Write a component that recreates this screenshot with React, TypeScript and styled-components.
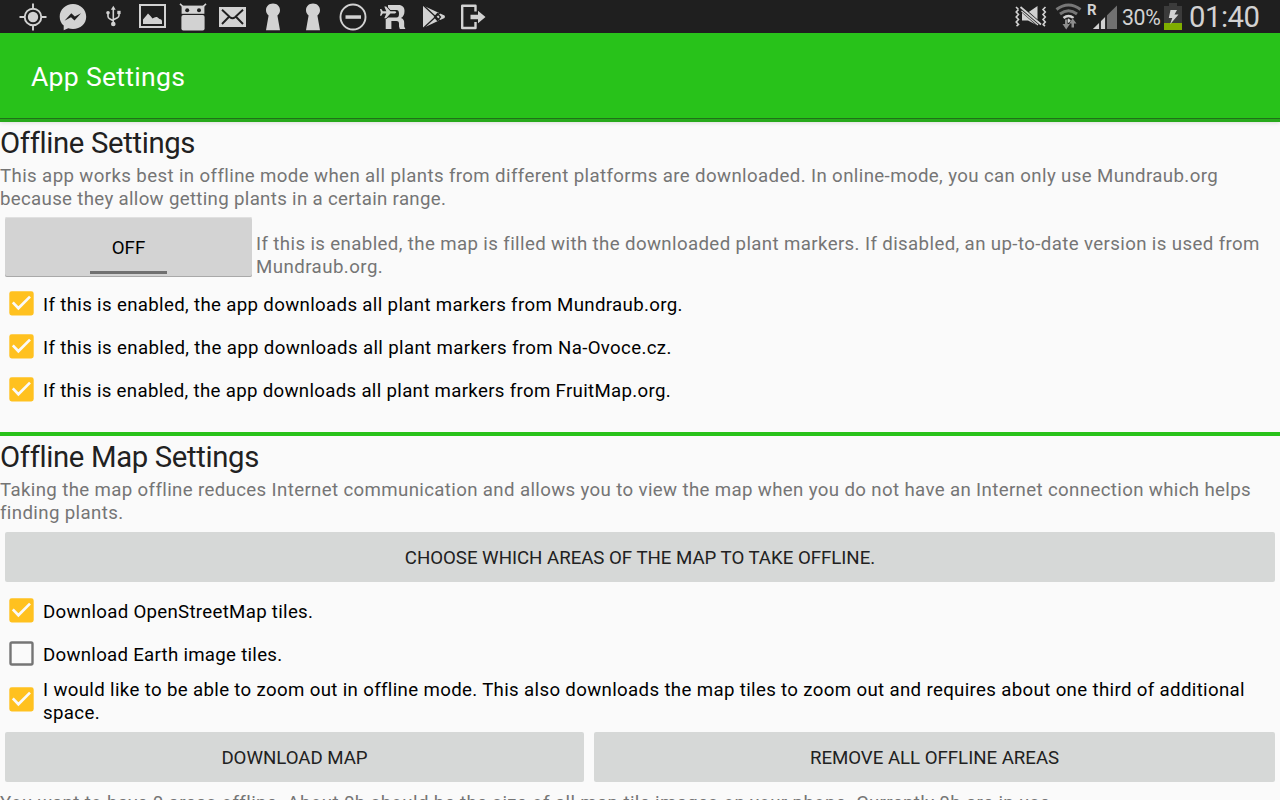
import React from "react";
import styled, { createGlobalStyle } from "styled-components";

const Global = createGlobalStyle`
  * { box-sizing: border-box; }
  html, body { margin: 0; padding: 0; overflow: hidden; background: #fafafa; }
  body { font-family: Roboto, "Liberation Sans", sans-serif; }
`;

const Screen = styled.div`
  width: 1280px;
  height: 800px;
  overflow: hidden;
  background: #fafafa;
`;

const StatusBar = styled.header`
  display: flex;
  justify-content: space-between;
  height: 33px;
  padding-left: 13px;
  background: #1f1f1f;
  color: #d2d2d2;
`;

const IconStrip = styled.div`
  display: flex;
  svg { display: block; }
`;

const Battery = styled.span`
  width: 40px;
  margin-left: 4px;
  font-size: 21.3px;
  line-height: 36px;
  letter-spacing: -0.35px;
`;

const Clock = styled.span`
  width: 96px;
  padding-left: 5px;
  font-size: 29.3px;
  line-height: 34px;
  letter-spacing: -0.5px;
`;

const ActionBar = styled.div`
  display: flex;
  align-items: center;
  height: 89px;
  padding: 0 31px 2px;
  background: linear-gradient(#28c21a 0 85px, #20711a 85px 86px, #27a91b 86px 89px);
  box-shadow: 0 1px 4px rgba(0, 0, 0, 0.12);
  color: #fff;
`;

const Title = styled.h1`
  margin: 0;
  font-size: 26.6px;
  font-weight: 400;
  letter-spacing: 0.27px;
`;

const Heading = styled.h2`
  height: 34px;
  margin: 0;
  font-size: 29.3px;
  line-height: 34px;
  font-weight: 400;
  color: #212121;
  white-space: nowrap;
  letter-spacing: -0.35px;
`;

const Section = styled.section<{ $height?: number }>`
  padding-top: 4px;
  ${(p) => (p.$height ? `height: ${p.$height}px;` : "")}
`;

const Description = styled.div<{ $top?: number }>`
  padding-top: ${(p) => p.$top ?? 0}px;
  color: #757575;
`;

const Line = styled.span<{ $spacing?: number }>`
  display: block;
  width: max-content;
  height: 23px;
  font-size: 18.66px;
  line-height: 23px;
  white-space: nowrap;
  letter-spacing: ${(p) => p.$spacing ?? 0.37}px;
`;

const ToggleRow = styled.div`
  display: flex;
  margin-top: 6px;
  padding-left: 5px;
  height: 65px;
`;

const Toggle = styled.button`
  display: flex;
  flex-direction: column;
  align-items: center;
  justify-content: flex-end;
  width: 247px;
  height: 60px;
  margin-right: 4px;
  padding: 0 0 3px;
  border: 0;
  border-radius: 2px;
  background: #d3d3d3;
  box-shadow: inset 0 1px 0 #e0e0e0, inset 0 -1px 0 #a9a9a9;
  color: #000;
  font: 18.66px Roboto, sans-serif;
`;

const ToggleLabel = styled.span`
  line-height: 22px;
  margin-bottom: 12px;
`;

const Indicator = styled.span`
  width: 77px;
  height: 3px;
  background: #707070;
`;

const CheckRow = styled.label<{ $height?: number }>`
  display: flex;
  align-items: center;
  height: ${(p) => p.$height ?? 43}px;
  padding-left: 9px;
  color: #000;
  svg { flex: none; margin-right: 9px; }
`;

const CheckLabel = styled.span<{ $top: number }>`
  padding-top: ${(p) => p.$top}px;
`;

const CheckGroup = styled.div`
  margin-top: 7px;
`;

const Divider = styled.hr`
  height: 4px;
  margin: 0;
  border: 0;
  background: #28c21a;
`;

const ButtonRow = styled.div<{ $top: number }>`
  display: flex;
  gap: 10px;
  padding: ${(p) => p.$top}px 5px 0;
`;

const Button = styled.button<{ $width?: number }>`
  ${(p) => (p.$width ? `width: ${p.$width}px;` : "flex: 1;")}
  height: 50px;
  padding: 2px 0 0;
  border: 0;
  border-radius: 2px;
  background: #d6d8d7;
  color: #212121;
  font: 18.66px Roboto, sans-serif;
  letter-spacing: -0.02px;
`;

function CheckBox({ checked }: { checked: boolean }) {
  return (
    <svg width="25" height="25" viewBox="0 0 25 25">
      {checked ? (
        <>
          <rect x="0.3" y="0.3" width="24.4" height="24.2" rx="2.4" fill="#ffc11f" />
          <path d="M3.8 11.4L9.4 17.2L21 5.6" fill="none" stroke="#fafafa" strokeWidth="2.7" />
        </>
      ) : (
        <rect x="1.5" y="1.5" width="22" height="22" rx="1.4" fill="none" stroke="#757575" strokeWidth="2.4" />
      )}
    </svg>
  );
}

function Check({ checked = true, spacing = 0.34, lines, height }: {
  checked?: boolean; spacing?: number; lines: string[]; height?: number;
}) {
  return (
    <CheckRow $height={height}>
      <CheckBox checked={checked} />
      <CheckLabel $top={lines.length > 1 ? 5 : 3}>
        {lines.map((l) => <Line key={l} $spacing={spacing}>{l}</Line>)}
      </CheckLabel>
    </CheckRow>
  );
}

const INK = "#d2d2d2";
const BAR = "#1f1f1f";

const keyhole = (
  <path d="M20 3.6C15.8 3.6 13 6.5 13 10.2C13 12.6 14.2 14.2 15.6 15.4L13 30.3H27L24.4 15.4C25.8 14.2 27 12.6 27 10.2C27 6.5 24.2 3.6 20 3.6Z" fill={INK} />
);

const notificationIcons: React.ReactNode[] = [
  <g fill="none" stroke={INK}>
    <circle cx="20" cy="17" r="8.3" strokeWidth="1.9" />
    <circle cx="20" cy="17" r="5.2" fill={INK} stroke="none" />
    <path d="M20 3.5V9M20 25V30.5M6.5 17H12M28 17H33.5" strokeWidth="1.9" />
  </g>,
  <g>
    <path d="M20 4C12.6 4 6.7 9.6 6.7 16.7C6.7 20.4 8.3 23.5 10.7 25.6V30.3L15.2 28.3C16.7 28.8 18.3 29 20 29C27.4 29 33.2 23.7 33.2 16.7S27.4 4 20 4Z" fill={INK} />
    <path d="M11.5 20.8L18.3 13.2L21.8 16.4L28 13.2L21.5 20.5L18 17.2Z" fill={BAR} />
  </g>,
  <g stroke={INK} fill="none" strokeWidth="1.6">
    <path d="M20.3 8V24M15 13V16.5Q15 18 17 19L20.3 20.8M26 12.5V15.5Q26 17 24 18L20.3 19.8" />
    <path d="M20.3 5.8L22.7 9.8H17.9Z" fill={INK} stroke="none" />
    <circle cx="15" cy="12.8" r="1.8" fill={INK} stroke="none" />
    <rect x="24.3" y="10.8" width="3.3" height="3.3" fill={INK} stroke="none" />
    <circle cx="20.3" cy="24" r="2.3" fill={INK} stroke="none" />
  </g>,
  <g>
    <rect x="7" y="5" width="25" height="22" fill="none" stroke={INK} strokeWidth="2" />
    <path d="M10 24V19.5Q11.5 17.5 13 16L15 13.5L17.5 16L19.5 18.5Q22 16.5 24 17L26.5 19Q29 19 29 21.5V24Z" fill={INK} />
  </g>,
  <g>
    <path d="M7 3.8L9.8 6.5M33 3.8L30.2 6.5" stroke={INK} strokeWidth="1.6" />
    <path d="M8.6 5.6H31.4V13.8H8.6Z" fill={INK} />
    <circle cx="14.2" cy="10.2" r="2" fill={BAR} /><circle cx="26" cy="10.2" r="2" fill={BAR} />
    <rect x="8.4" y="15" width="23.2" height="15.4" rx="2" fill={INK} />
  </g>,
  <g>
    <rect x="6" y="7" width="27" height="20" fill={INK} />
    <path d="M9 9.8L17 17.2Q19.5 19.4 22 17.2L30 9.8M9 24L15.8 17M30 24L23.2 17" fill="none" stroke={BAR} strokeWidth="1.9" />
  </g>,
  keyhole,
  keyhole,
  <g>
    <circle cx="20" cy="17" r="12.5" fill="none" stroke={INK} strokeWidth="1.9" />
    <rect x="12.5" y="15.3" width="15.5" height="3.5" fill={INK} />
  </g>,
  <g fill={INK}>
    <path d="M15 5H25.500C29.500 5 31.500 7.500 31.500 11C31.500 14.500 30.300 16.800 28 18C30.600 19 31.200 20.500 31.200 23V26.500L32.400 29H26.800L26 26.500V23.500C26 21.800 25 21 23.500 21H18.400V29H12.700V18.500Q12.700 17.500 13.700 17.500H23.500C25.500 17.500 26 16 26 13.500S25 10 23.500 10H15Z" />
    <path d="M7 9H8.300L9.800 11.300H13.300L11.300 6.500H13.200L17.400 11.300H22Q24.600 12.300 22 13.500H17.400L13.200 18.300H11.300L13.300 13.500H9.800L8.300 15.800H7L7.800 12.400Z" stroke={BAR} strokeWidth="1.600" paintOrder="stroke" />
  </g>,
  <g>
    <path d="M10 5.6L31.5 15.5Q32.5 16.8 31.5 18L10 28Z" fill={INK} />
    <path d="M10 5L27.5 21.3M10 28.5L27.5 12.3M21.5 17L24.5 13.5L27.5 17L24.5 20.5Z" stroke={BAR} strokeWidth="1.3" fill="none" />
  </g>,
  <g>
    <path d="M22.5 11.5V5.8H9.2V28H22.5V22" fill="none" stroke={INK} strokeWidth="2.4" strokeLinejoin="round" />
    <path d="M17.5 14.8H25V10.8L32.5 17L25 23.2V19.2H17.5Z" fill={INK} />
  </g>,
];

function SystemIcons() {
  return (
    <svg width="118" height="33" viewBox="1000 0 118 33">
      <g fill="none" stroke={INK} strokeWidth="1.6">
        <path d="M1016 7L1018.500 9.500L1016.200 12L1018.500 14.500L1016.200 17L1018.500 19.500L1016.200 22L1018.500 24.500L1016.500 26" />
        <path d="M1045.500 7L1043 9.500L1045.300 12L1043 14.500L1045.300 17L1043 19.500L1045.300 22L1043 24.500L1045 26" />
      </g>
      <path d="M1022 12.500H1028L1037.500 6V25.500L1028 20.500H1022Z" fill={INK} />
      <path d="M1020 7.500L1041 26" stroke={BAR} strokeWidth="5" />
      <path d="M1020.500 7L1041 24.500" stroke={INK} strokeWidth="1.8" />
      <path d="M1021.500 11L1038 25" stroke={INK} strokeWidth="1.2" />
      <g fill="none" strokeWidth="3">
        <path d="M1056.500 9.500Q1068.500 .5 1080.500 9.500" stroke="#777" />
        <path d="M1060 14Q1068.500 7.500 1077 14" stroke="#777" />
        <path d="M1063.500 18Q1068.500 14 1073.500 18" stroke={INK} strokeWidth="2.5" />
        <path d="M1066 20.500L1068.500 23L1071 20.500L1068.500 18.500Z" fill={INK} stroke="none" />
      </g>
      <path d="M1062.500 24H1065V19.500H1067.500V24H1070L1066.200 29.500ZM1069 23.500L1072.700 18.500L1076.500 23.500H1074V27.500H1071.500V23.500Z" fill="#8d8d8d" stroke={BAR} strokeWidth=".8" paintOrder="stroke" />
      <path d="M1093 29L1117 5.500V29Z" fill="#707070" />
      <path d="M1093 29L1106 16.200V29Z" fill={INK} />
      <path d="M1100 20V29M1106 15V29" stroke={BAR} strokeWidth="1.8" />
      <text x="1087" y="14.8" fontSize="15" fontWeight="700" fill={INK} fontFamily="Roboto">R</text>
    </svg>
  );
}

function BatteryIcon() {
  return (
    <svg width="22" height="33" viewBox="1162 0 22 33">
      <path d="M1164 6H1169V3H1177V6H1182V23H1164Z" fill="#3b3b3b" />
      <rect x="1164" y="23" width="18" height="7" fill="#80ae00" />
      <path d="M1170.500 10H1177L1174.500 14.500H1178.500L1170 24.500L1172.300 18H1168.800Z" fill={INK} />
    </svg>
  );
}

export default function App() {
  return (
    <Screen>
      <Global />
      <StatusBar>
        <IconStrip>
          {notificationIcons.map((icon, i) => (
            <svg key={i} width="40" height="33" viewBox="0 0 40 33">{icon}</svg>
          ))}
        </IconStrip>
        <IconStrip>
          <SystemIcons />
          <Battery>30%</Battery>
          <BatteryIcon />
          <Clock>01:40</Clock>
        </IconStrip>
      </StatusBar>
      <ActionBar><Title>App Settings</Title></ActionBar>

      <Section $height={310}>
        <Heading>Offline Settings</Heading>
        <Description $top={5}>
          <Line $spacing={0.38}>This app works best in offline mode when all plants from different platforms are downloaded. In online-mode, you can only use Mundraub.org</Line>
          <Line $spacing={0.32}>because they allow getting plants in a certain range.</Line>
        </Description>
        <ToggleRow>
          <Toggle>
            <ToggleLabel>OFF</ToggleLabel>
            <Indicator />
          </Toggle>
          <Description $top={16}>
            <Line $spacing={0.38}>If this is enabled, the map is filled with the downloaded plant markers. If disabled, an up-to-date version is used from</Line>
            <Line $spacing={0.45}>Mundraub.org.</Line>
          </Description>
        </ToggleRow>
        <Check lines={["If this is enabled, the app downloads all plant markers from Mundraub.org."]} />
        <Check spacing={0.355} lines={["If this is enabled, the app downloads all plant markers from Na-Ovoce.cz."]} />
        <Check spacing={0.315} lines={["If this is enabled, the app downloads all plant markers from FruitMap.org."]} />
      </Section>
      <Divider />
      <Section>
        <Heading>Offline Map Settings</Heading>
        <Description $top={5}>
          <Line $spacing={0.36}>Taking the map offline reduces Internet communication and allows you to view the map when you do not have an Internet connection which helps</Line>
          <Line>finding plants.</Line>
        </Description>
        <ButtonRow $top={7}>
          <Button>CHOOSE WHICH AREAS OF THE MAP TO TAKE OFFLINE.</Button>
        </ButtonRow>
        <CheckGroup>
          <Check spacing={0.3} lines={["Download OpenStreetMap tiles."]} />
          <Check spacing={0.28} checked={false} lines={["Download Earth image tiles."]} />
          <Check spacing={0.345} height={49} lines={["I would like to be able to zoom out in offline mode. This also downloads the map tiles to zoom out and requires about one third of additional", "space."]} />
        </CheckGroup>
        <ButtonRow $top={8}>
          <Button $width={579}>DOWNLOAD MAP</Button>
          <Button>REMOVE ALL OFFLINE AREAS</Button>
        </ButtonRow>
        <Description $top={10}>
          <Line $spacing={0.38}>You want to have 0 areas offline. About 0b should be the size of all map tile images on your phone. Currently 0b are in use.</Line>
        </Description>
      </Section>
    </Screen>
  );
}
